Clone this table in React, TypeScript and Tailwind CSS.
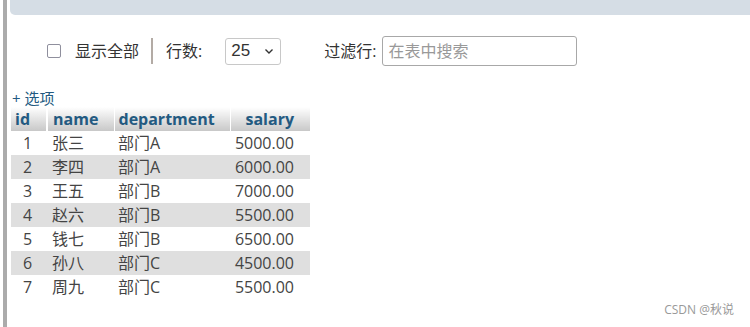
import React from 'react';

type Row = { id: number; name: string; department: string; salary: string };

const ROWS: Row[] = [
  { id: 1, name: '张三', department: '部门A', salary: '5000.00' },
  { id: 2, name: '李四', department: '部门A', salary: '6000.00' },
  { id: 3, name: '王五', department: '部门B', salary: '7000.00' },
  { id: 4, name: '赵六', department: '部门B', salary: '5500.00' },
  { id: 5, name: '钱七', department: '部门B', salary: '6500.00' },
  { id: 6, name: '孙八', department: '部门C', salary: '4500.00' },
  { id: 7, name: '周九', department: '部门C', salary: '5500.00' },
];

const font = { fontFamily: '"Open Sans", "Noto Sans CJK SC", sans-serif' };

const App: React.FC = () => {
  return (
    <div className="relative flex h-[327px] w-[750px] overflow-hidden bg-white" style={font}>
      {/* left frame edge */}
      <div className="ml-[3px] w-[4px] shrink-0 bg-[#ababab]" />

      <div className="flex-1">
        {/* top nav strip */}
        <div className="ml-[3px] h-[15px] rounded-bl-[5px] bg-[#d5dde5]" />

        {/* controls */}
        <div className="mt-[21px] flex h-[30px] items-center pl-[40px] text-[16px] text-[#333]">
          <span className="h-[14px] w-[14px] shrink-0 rounded-[2px] border-[1.5px] border-[#8f8f9d]" />
          <span className="ml-[14px]">显示全部</span>
          <span className="ml-[12px] h-[26px] w-[2px] bg-[#b3aba5]" />
          <span className="ml-[13px]">行数:</span>
          <div className="ml-[23px] flex h-[27px] w-[56px] items-center justify-between rounded-[3px] border border-[#c8c8c8] px-[5px]">
            <span className="text-[17px]" style={{ fontFamily: '"Liberation Sans Narrow", "Liberation Sans", sans-serif' }}>25</span>
            <svg width="12" height="12" viewBox="0 0 12 12" fill="none" stroke="#333" strokeWidth="1.4">
              <path d="M2.5 4.5 L6 8 L9.5 4.5" />
            </svg>
          </div>
          <span className="ml-[43px]">过滤行:</span>
          <div className="ml-[6px] flex h-[30px] w-[195px] items-center rounded-[3px] border border-[#a8a8a8] px-[5px] text-[#999]">
            在表中搜索
          </div>
        </div>

        {/* options link */}
        <div className="mt-[23px] pl-[5px] text-[15px] leading-[18px] text-[#235a81]">+&nbsp;选项</div>

        {/* data table */}
        <table className="ml-[4px] border-collapse text-[16px] text-[#444]">
          <thead>
            <tr className="h-[23px] text-[16px] font-bold text-[#235a81]">
              <th className="w-[36px] border-r-2 border-white bg-gradient-to-b from-white to-[#c8c8c8] pl-[4px] text-left font-bold">id</th>
              <th className="w-[67px] border-r border-white bg-gradient-to-b from-white to-[#c8c8c8] pl-[5px] text-left font-bold">name</th>
              <th className="w-[116px] border-r border-white bg-gradient-to-b from-white to-[#c8c8c8] pl-[4px] text-left font-bold">department</th>
              <th className="w-[80px] bg-gradient-to-b from-white to-[#c8c8c8] pr-[16px] text-right font-bold">salary</th>
            </tr>
          </thead>
          <tbody>
            {ROWS.map((r, i) => (
              <tr key={r.id} className={`h-[24px] ${i % 2 === 1 ? 'bg-[#dfdfdf]' : 'bg-white'}`}>
                <td className="pl-[12px] leading-[24px]">{r.id}</td>
                <td className="pl-[5px] leading-[24px]">{r.name}</td>
                <td className="pl-[4px] leading-[24px]">{r.department}</td>
                <td className="pr-[16px] text-right leading-[24px]">{r.salary}</td>
              </tr>
            ))}
          </tbody>
        </table>
      </div>

      <div className="absolute bottom-[8px] right-[16px] text-[12px] text-[#999]">CSDN @秋说</div>
    </div>
  );
};

export default App;
